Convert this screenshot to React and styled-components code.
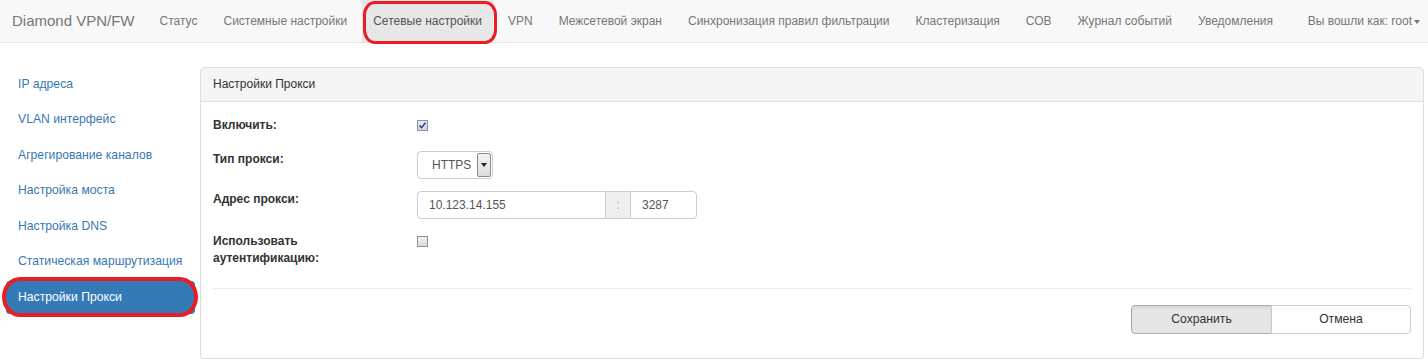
import React from 'react';
import styled, { createGlobalStyle } from 'styled-components';

const GlobalStyle = createGlobalStyle`
  html, body {
    margin: 0;
    padding: 0;
    background: #fff;
    font-family: "Liberation Sans", Arial, sans-serif;
    font-size: 12px;
    color: #333;
  }
  * { box-sizing: border-box; }
`;

// annotation marker drawn over the screenshot
const Marker = styled.span`
  position: absolute;
  pointer-events: none;
  border: ${(p) => p.$w || 3}px solid #ea1c24;
  border-radius: ${(p) => p.$radius || '12px'};
  top: ${(p) => p.$t}px;
  left: ${(p) => p.$l}px;
  right: ${(p) => p.$r}px;
  bottom: ${(p) => p.$b}px;
`;

// --- navbar ---
const Navbar = styled.div`
  display: flex;
  height: 43px;
  background: #f8f8f8;
  border-bottom: 1px solid #e7e7e7;
`;

const Brand = styled.div`
  flex-shrink: 0;
  padding: 0 12px;
  line-height: 42px;
  font-size: 15px;
  color: #777;
  white-space: nowrap;
`;

const NavList = styled.div`
  display: flex;
`;

const NavItem = styled.div`
  position: relative;
  flex-shrink: 0;
  padding: 0 ${(p) => (p.$active ? 11 : 13)}px;
  margin: 0 ${(p) => (p.$active ? 2 : 0)}px;
  line-height: 42px;
  height: 42px;
  font-size: 12px;
  color: ${(p) => (p.$active ? '#555' : '#777')};
  background: ${(p) => (p.$active ? '#e7e7e7' : 'transparent')};
  white-space: nowrap;
`;

const UserMenu = styled(NavItem)`
  margin-left: auto;
  padding-right: 8px;
  display: flex;
  align-items: center;
`;

const Caret = styled.span`
  display: inline-block;
  margin-left: 2px;
  margin-top: 2px;
  border-top: 4px solid #777;
  border-left: 3.5px solid transparent;
  border-right: 3.5px solid transparent;
`;

// --- page ---
const Page = styled.div`
  display: flex;
  padding: 24px 4px 0 6px;
`;

const Sidebar = styled.div`
  width: 189px;
  flex-shrink: 0;
  padding-top: 0.5px;
`;

const SideItem = styled.div`
  position: relative;
  height: 33px;
  line-height: 33px;
  margin-bottom: 2.5px;
  padding: 0 12px;
  border-radius: 4px;
  font-size: 12.2px;
  white-space: nowrap;
  color: ${(p) => (p.$active ? '#fff' : '#3a78b0')};
  background: ${(p) => (p.$active ? '#337ab7' : 'transparent')};
`;

const Panel = styled.div`
  flex: 1;
  margin-left: 5px;
  border: 1px solid #ddd;
  border-radius: 4px;
  box-shadow: 0 1px 1px rgba(0, 0, 0, 0.05);
  background: #fff;
`;

const PanelHeading = styled.div`
  height: 34px;
  line-height: 33px;
  padding: 0 12px;
  background: #f5f5f5;
  border-bottom: 1px solid #ddd;
  border-radius: 3px 3px 0 0;
  font-size: 12px;
  color: #333;
`;

const PanelBody = styled.div`
  padding: 11px 12px 24px;
`;

const FormRow = styled.div`
  display: flex;
  align-items: flex-start;
  margin-top: ${(p) => p.$mt || 0}px;
  min-height: ${(p) => p.$h || 28}px;
`;

const Label = styled.div`
  width: 204px;
  flex-shrink: 0;
  padding-top: ${(p) => p.$pt || 0}px;
  font-weight: bold;
  font-size: 12px;
  line-height: 17px;
  color: #333;
`;

const Checkbox = styled.span`
  display: inline-flex;
  align-items: center;
  justify-content: center;
  width: 11px;
  height: 11px;
  margin-top: ${(p) => p.$mt || 0}px;
  border: 1px solid #8f8f9d;
  background: ${(p) => (p.$checked ? 'linear-gradient(#e4eaf4, #c9d5ea)' : 'linear-gradient(#f2f2f2, #dcdcdc)')};
`;

const Select = styled.div`
  display: flex;
  align-items: center;
  justify-content: space-between;
  width: 76px;
  height: 28px;
  padding: 0 1px 0 14px;
  border: 1px solid #ccc;
  border-radius: 4px;
  font-size: 12px;
  color: #555;
`;

const SelectButton = styled.span`
  display: flex;
  align-items: center;
  justify-content: center;
  width: 14px;
  height: 24px;
  border: 1px solid #8a8a8a;
  border-radius: 2px;
  background: linear-gradient(#f4f4f4, #dedede);
`;

const DownTri = styled.span`
  border-top: 4px solid #222;
  border-left: 3px solid transparent;
  border-right: 3px solid transparent;
`;

const InputGroup = styled.div`
  display: flex;
  height: 28px;
`;

const Input = styled.div`
  width: ${(p) => p.$w}px;
  height: 28px;
  line-height: 26px;
  padding: 0 11px;
  border: 1px solid #ccc;
  border-radius: ${(p) => p.$radius};
  font-size: 12px;
  color: #555;
  background: #fff;
`;

const Addon = styled.div`
  width: 24px;
  height: 28px;
  line-height: 26px;
  text-align: center;
  border-top: 1px solid #ccc;
  border-bottom: 1px solid #ccc;
  background: #eee;
  color: #aaa;
  font-size: 12px;
`;

const Divider = styled.div`
  margin-top: 21px;
  border-top: 1px solid #eee;
`;

const Actions = styled.div`
  display: flex;
  justify-content: flex-end;
  margin-top: 16px;
`;

const Button = styled.div`
  width: ${(p) => p.$w}px;
  height: 29px;
  line-height: 27px;
  text-align: center;
  font-size: 12.2px;
  color: #333;
  border: 1px solid ${(p) => (p.$pressed ? '#adadad' : '#ccc')};
  background: ${(p) => (p.$pressed ? '#e6e6e6' : '#fff')};
  box-shadow: ${(p) => (p.$pressed ? 'inset 0 2px 3px rgba(0,0,0,0.08)' : 'none')};
  border-radius: ${(p) => p.$radius};
  margin-left: ${(p) => p.$ml || 0}px;
`;

const navItems = [
  'Статус',
  'Системные настройки',
  'Сетевые настройки',
  'VPN',
  'Межсетевой экран',
  'Синхронизация правил фильтрации',
  'Кластеризация',
  'СОВ',
  'Журнал событий',
  'Уведомления',
];

const sideItems = [
  'IP адреса',
  'VLAN интерфейс',
  'Агрегирование каналов',
  'Настройка моста',
  'Настройка DNS',
  'Статическая маршрутизация',
  'Настройки Прокси',
];

const CheckMark = () => (
  <svg width="9" height="9" viewBox="0 0 9 9">
    <path d="M1.5 4.6 L3.6 6.8 L7.6 1.6" fill="none" stroke="#2b3c5e" strokeWidth="1.4" />
  </svg>
);

export default function App() {
  return (
    <>
      <GlobalStyle />
      <Navbar>
        <Brand>Diamond VPN/FW</Brand>
        <NavList>
          {navItems.map((item) => {
            const active = item === 'Сетевые настройки';
            return (
              <NavItem key={item} $active={active}>
                {item}
                {active && <Marker $t={1} $l={1} $r={-4} $b={-2} $w={3.5} $radius="12px / 14px" />}
              </NavItem>
            );
          })}
        </NavList>
        <UserMenu>
          Вы вошли как: root
          <Caret />
        </UserMenu>
      </Navbar>

      <Page>
        <Sidebar>
          {sideItems.map((item) => {
            const active = item === 'Настройки Прокси';
            return (
              <SideItem key={item} $active={active}>
                {item}
                {active && <Marker $t={-3.5} $l={-4} $r={-3} $b={-3} $w={4} $radius="18px / 20px" />}
              </SideItem>
            );
          })}
        </Sidebar>

        <Panel>
          <PanelHeading>Настройки Прокси</PanelHeading>
          <PanelBody>
            <FormRow $h={27}>
              <Label $pt={3.5}>Включить:</Label>
              <Checkbox $checked $mt={6.5}>
                <CheckMark />
              </Checkbox>
            </FormRow>
            <FormRow $mt={11}>
              <Label>Тип прокси:</Label>
              <Select>
                HTTPS
                <SelectButton>
                  <DownTri />
                </SelectButton>
              </Select>
            </FormRow>
            <FormRow $mt={12}>
              <Label>Адрес прокси:</Label>
              <InputGroup>
                <Input $w={189} $radius="4px 0 0 4px">10.123.14.155</Input>
                <Addon>:</Addon>
                <Input $w={67} $radius="0 4px 4px 0">3287</Input>
              </InputGroup>
            </FormRow>
            <FormRow $mt={13.5} $h={34}>
              <Label>
                Использовать
                <br />
                аутентификацию:
              </Label>
              <Checkbox $mt={3.5} />
            </FormRow>
            <Divider />
            <Actions>
              <Button $w={141} $pressed $radius="4px 0 0 4px">Сохранить</Button>
              <Button $w={140} $ml={-1} $radius="0 4px 4px 0">Отмена</Button>
            </Actions>
          </PanelBody>
        </Panel>
      </Page>
    </>
  );
}
